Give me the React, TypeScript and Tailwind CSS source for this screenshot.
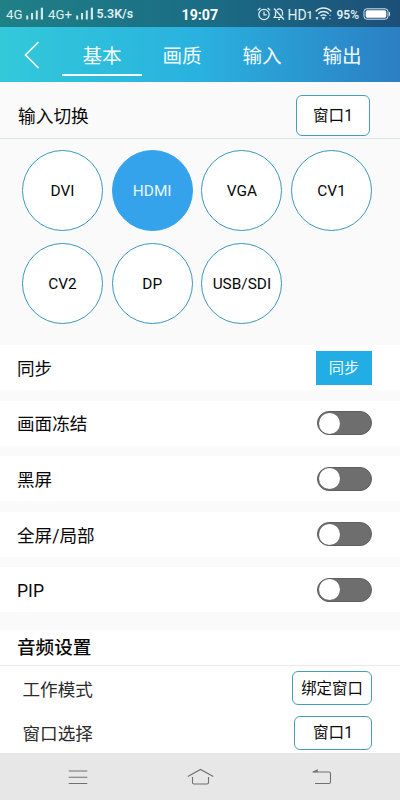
import { useState } from 'react'
import clsx from 'clsx'

const tabs = ['基本', '画质', '输入', '输出']
const sources = ['DVI', 'HDMI', 'VGA', 'CV1', 'CV2', 'DP', 'USB/SDI']
const switches = ['画面冻结', '黑屏', '全屏/局部', 'PIP']

function Signal() {
  return (
    <svg className="shrink-0" width="18" height="13" viewBox="0 0 18 13" fill="#d3e6e8">
      <rect x="0.2" y="8.5" width="2" height="4" />
      <rect x="5" y="6" width="2" height="6.5" />
      <rect x="9.8" y="3.5" width="2" height="9" />
      <rect x="14.8" y="0.7" width="2.2" height="11.8" />
    </svg>
  )
}

function StatusBar() {
  return (
    <div className="flex h-[27px] shrink-0 items-center bg-linear-to-r from-[#1f8086] via-[#1b6d85] to-[#1c4f78] text-[#e0eff1]">
      <span className="ml-[6px] w-[19.5px] pt-[3px] text-[13.2px] leading-none">4G</span>
      <Signal />
      <span className="ml-[4.5px] w-[27.5px] pt-[3px] text-[13.2px] leading-none">4G+</span>
      <Signal />
      <span className="ml-[3px] w-[40px] pt-[2px] text-[12.4px] leading-none font-semibold whitespace-nowrap">5.3K/s</span>
      <span className="ml-[45px] w-[75px] pt-[3px] text-[14.2px] leading-none font-bold text-white">19:07</span>
      {/* alarm */}
      <svg width="14" height="14" viewBox="0 0 14 14" fill="none" stroke="currentColor" strokeWidth="1.2">
        <circle cx="7" cy="7.5" r="5.2" />
        <path d="M7 4.5v3.3h2.7M.8 3.4 3.4 1M13.2 3.4 10.6 1" />
      </svg>
      {/* muted bell */}
      <svg className="ml-[2px]" width="12" height="14" viewBox="0 0 12 14" fill="none" stroke="currentColor" strokeWidth="1.2">
        <path d="M1 1.5 11 12.5M4 2.8C6.5.8 9.5 2.8 9.5 5.5v3M2.5 4.5v4.3L1.2 10.5h7.500M5 12.4h2" />
      </svg>
      <span className="ml-[3px] w-[19px] pt-[3px] text-[14px] leading-none">HD</span>
      <span className="w-[6px] pt-[4px] text-[11px] leading-none font-medium">1</span>
      {/* wifi */}
      <svg className="ml-[2px] shrink-0" width="17" height="14" viewBox="0 0 17 14" fill="none" stroke="currentColor" strokeWidth="1.4">
        <path d="M.7 4.5C5-.2 12-.2 16.3 4.5M3.2 6.8c3-3 7.6-3 10.6 0M5.6 9.1c1.7-1.7 4.1-1.7 5.8 0" />
        <path d="M7 10.6h3L8.5 12.4ZM1 10.5h2L2 12.5ZM14.2 8.3h1.6M14.2 11.8h1.6" fill="currentColor" strokeWidth=".7" />
      </svg>
      <span className="ml-[5px] w-[26px] pt-[2px] text-[12px] leading-none font-semibold">95%</span>
      <svg className="shrink-0" width="28" height="12" viewBox="0 0 28 12">
        <rect x="1" y="0.8" width="24" height="10.4" rx="2.8" fill="none" stroke="#d5e3eb" />
        <rect x="2.7" y="2.3" width="20.6" height="7.4" rx="1.6" fill="#fff" />
        <path d="M26 3.500c1.500.8 1.500 4.200 0 5Z" fill="#d5e3eb" />
      </svg>
    </div>
  )
}

function Toggle({ on, onClick }: { on: boolean; onClick: () => void }) {
  return (
    <button
      onClick={onClick}
      className={clsx(
        'flex h-[24px] w-[55.5px] items-center rounded-full border border-[#5f5f5f] px-[1px]',
        on ? 'justify-end bg-[#22aee5]' : 'bg-[#6e6e6e]'
      )}
    >
      <span className="h-[21px] w-[21px] rounded-full bg-white" />
    </button>
  )
}

export default function App() {
  const [tab, setTab] = useState(0)
  const [source, setSource] = useState('HDMI')
  const [enabled, setEnabled] = useState<Record<string, boolean>>({})

  return (
    <div className="flex h-[800px] w-[400px] flex-col overflow-hidden bg-[#fafafa] font-[Roboto,'Noto_Sans_CJK_SC',sans-serif] text-[#080808]">
      <StatusBar />

      {/* Header tabs */}
      <div className="flex h-[55px] shrink-0 bg-linear-to-r from-[#33c9da] via-[#29b1df] to-[#2b7fc3] text-[#f2fbfd]">
        <button className="flex w-[62px] items-center pl-[23px]">
          <svg width="18" height="30" viewBox="0 0 18 30" fill="none" stroke="currentColor" strokeWidth="1.7">
            <path d="M15.5 2 2.5 15l13 13" />
          </svg>
        </button>
        {tabs.map((name, i) => (
          <button
            key={name}
            onClick={() => setTab(i)}
            className={clsx(
              'mb-[6px] w-[80px] border-b-2 pt-[12px] text-[19.6px] leading-none',
              i === tab ? 'border-[#f2fbfd]' : 'border-transparent'
            )}
          >
            {name}
          </button>
        ))}
      </div>

      {/* Input switching */}
      <div className="flex h-[57px] shrink-0 items-center justify-between border-b border-[#cfe8ea] pt-[10px] pr-[30px] pl-[18px]">
        <span className="pt-[4px] text-[17.7px]">输入切换</span>
        <button className="h-[41px] w-[74px] rounded-[6px] border border-[#459eb8] bg-white pt-[4px] text-[15.6px]">窗口1</button>
      </div>
      <div className="grid h-[206px] shrink-0 grid-cols-[repeat(4,81px)] content-start gap-x-[8.7px] gap-y-[11.5px] pt-[11px] pl-[22px]">
        {sources.map(name => (
          <button
            key={name}
            onClick={() => setSource(name)}
            className={clsx(
              'h-[81px] w-[81px] rounded-full border pt-[3px] text-[15.4px]',
              name === source ? 'border-[#35a3ec] bg-[#35a3ec] text-[#e8f6ff]' : 'border-[#3b96c0] bg-white'
            )}
          >
            {name}
          </button>
        ))}
      </div>

      {/* Settings rows */}
      <div className="flex shrink-0 flex-col gap-[10.6px] text-[17.6px]">
        <div className="flex h-[45px] items-center justify-between bg-white pr-[28px] pl-[17px]">
          <span className="pt-[3px]">同步</span>
          <button className="h-[34px] w-[56px] bg-[#22aee5] pt-[2px] text-[15.2px] text-[#f0fbff]">同步</button>
        </div>
        {switches.map(name => (
          <div key={name} className="flex h-[45px] items-center justify-between bg-white pr-[28px] pl-[17px]">
            <span className="pt-[3px]">{name}</span>
            <Toggle on={!!enabled[name]} onClick={() => setEnabled({ ...enabled, [name]: !enabled[name] })} />
          </div>
        ))}
      </div>

      {/* Audio */}
      <div className="mt-[17.6px] min-h-0 flex-1 overflow-hidden bg-white">
        <div className="flex h-[36px] items-center border-b border-[#e9e9e9] pt-[3px] pl-[17px] text-[18.6px] font-medium">音频设置</div>
        <div className="flex h-[44.5px] items-center justify-between pr-[28px] pl-[22.5px] text-[17.6px] text-[#2b2b2b]">
          <span className="pt-[3px]">工作模式</span>
          <button className="h-[34px] w-[80px] rounded-[6px] border border-[#459eb8] pt-[2px] text-[15.4px] text-[#080808]">绑定窗口</button>
        </div>
        <div className="flex h-[44.5px] items-center justify-between pr-[28px] pl-[22.5px] text-[17.6px] text-[#2b2b2b]">
          <span className="pt-[3px]">窗口选择</span>
          <button className="h-[34px] w-[78px] rounded-[6px] border border-[#459eb8] pt-[2px] text-[15.6px] text-[#080808]">窗口1</button>
        </div>
      </div>

      {/* System navigation */}
      <div className="flex h-[47px] shrink-0 items-center bg-[#e7e7e7] text-[#707070]">
        <svg className="ml-[68px]" width="20" height="18" viewBox="0 0 20 18" fill="none" stroke="currentColor" strokeWidth="1.1">
          <path d="M.7 3h18.600M.7 9.200h18.600M.7 15.500h18.600" />
        </svg>
        <svg className="ml-[99px]" width="27" height="18" viewBox="0 0 27 18" fill="none" stroke="currentColor" strokeWidth="1.1">
          <path d="M.8 8.500 13.500 1.500 26.200 8.500M5.500 9v5.500q0 1.500 1.500 1.500h13q1.500 0 1.500-1.500V9" />
        </svg>
        <svg className="ml-[98px]" width="20" height="18" viewBox="0 0 20 18" fill="none" stroke="currentColor" strokeWidth="1.1">
          <path d="M1 4H17q1.500 0 1.500 1.500V14q0 1.500-1.500 1.500H3" />
          <path d="M.5 4 5.500 1.500V4Z" fill="currentColor" strokeWidth=".4" />
        </svg>
      </div>
    </div>
  )
}
